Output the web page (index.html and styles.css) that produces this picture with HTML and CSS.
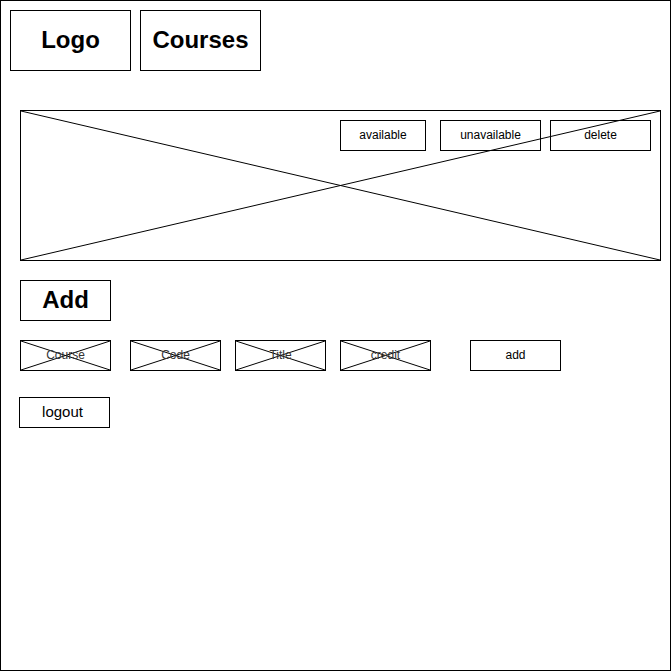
FILE: index.html
```html
<!DOCTYPE html>
<html lang="en">
<head>
  <meta charset="UTF-8" />
  <title>Courses</title>
  <link rel="stylesheet" href="styles.css">
</head>
<body>
  <div class="frame">
    <header class="top">
      <div class="tile">Logo</div>
      <div class="tile">Courses</div>
    </header>

    <section class="banner" aria-label="Course image">
      <div class="banner-actions">
        <button class="btn btn-available">available</button>
        <button class="btn btn-unavailable">unavailable</button>
        <button class="btn btn-delete">delete</button>
      </div>
      <svg class="cross" viewBox="0 0 100 100" preserveAspectRatio="none" aria-hidden="true">
        <line x1="0" y1="0" x2="100" y2="100" />
        <line x1="0" y1="100" x2="100" y2="0" />
      </svg>
    </section>

    <h2 class="add-title">Add</h2>

    <div class="add-row">
      <div class="field field-course">
        <svg class="cross" viewBox="0 0 100 100" preserveAspectRatio="none" aria-hidden="true"><line x1="0" y1="0" x2="100" y2="100" /><line x1="0" y1="100" x2="100" y2="0" /></svg>
        <span>Course</span>
      </div>
      <div class="field field-code">
        <svg class="cross" viewBox="0 0 100 100" preserveAspectRatio="none" aria-hidden="true"><line x1="0" y1="0" x2="100" y2="100" /><line x1="0" y1="100" x2="100" y2="0" /></svg>
        <span>Code</span>
      </div>
      <div class="field field-title">
        <svg class="cross" viewBox="0 0 100 100" preserveAspectRatio="none" aria-hidden="true"><line x1="0" y1="0" x2="100" y2="100" /><line x1="0" y1="100" x2="100" y2="0" /></svg>
        <span>Title</span>
      </div>
      <div class="field field-credit">
        <svg class="cross" viewBox="0 0 100 100" preserveAspectRatio="none" aria-hidden="true"><line x1="0" y1="0" x2="100" y2="100" /><line x1="0" y1="100" x2="100" y2="0" /></svg>
        <span>credit</span>
      </div>
      <button class="btn btn-add">add</button>
    </div>

    <button class="btn logout">logout</button>
  </div>
</body>
</html>
```

FILE: styles.css
```css
/* Reset */
* {
  box-sizing: border-box;
  margin: 0;
  padding: 0;
}
body {
  font-family: 'Liberation Sans', Arial, sans-serif;
  background: #fff;
  color: #000;
}
.frame {
  width: 671px;
  height: 671px;
  border: 1px solid #000;
  padding: 9px 0 0 9px;
  display: flex;
  flex-direction: column;
  align-items: flex-start;
}
/* Header */
.top {
  display: flex;
  gap: 9px;
}
.tile {
  width: 121px;
  height: 61px;
  border: 1px solid #000;
  padding-bottom: 2px;
  display: flex;
  align-items: center;
  justify-content: center;
  font-size: 24px;
  font-weight: 700;
}
/* Banner */
.banner {
  position: relative;
  width: 641px;
  height: 151px;
  margin: 39px 0 0 10px;
  border: 1px solid #000;
}
.cross {
  position: absolute;
  top: 0;
  left: 0;
  width: 100%;
  height: 100%;
}
.cross line {
  stroke: #000;
  stroke-width: 1px;
  vector-effect: non-scaling-stroke;
}
.banner-actions {
  position: absolute;
  top: 9px;
  right: 9px;
  display: flex;
}
.btn {
  height: 31px;
  border: 1px solid #000;
  background: transparent;
  padding-bottom: 1px;
  font-family: inherit;
  font-size: 12px;
  color: #000;
  display: flex;
  align-items: center;
  justify-content: center;
}
.btn-available {
  width: 86px;
  margin-right: 14px;
}
.btn-unavailable {
  width: 101px;
  margin-right: 9px;
}
.btn-delete {
  width: 101px;
}
/* Add section */
.add-title {
  width: 91px;
  height: 41px;
  margin: 19px 0 0 10px;
  border: 1px solid #000;
  padding-bottom: 2px;
  display: flex;
  align-items: center;
  justify-content: center;
  font-size: 24px;
  font-weight: 700;
}
.add-row {
  display: flex;
  margin: 19px 0 0 10px;
}
.field {
  position: relative;
  width: 91px;
  height: 31px;
  border: 1px solid #000;
  padding-bottom: 1px;
  display: flex;
  align-items: center;
  justify-content: center;
  font-size: 12px;
  color: #333;
}
.field span {
  position: relative;
}
.field-course {
  margin-right: 19px;
}
.field-code,
.field-title {
  margin-right: 14px;
}
.field-credit {
  margin-right: 39px;
}
.btn-add {
  width: 91px;
}
.logout {
  width: 91px;
  margin: 26px 0 0 9px;
  padding: 0 4px 2px 0;
  font-size: 15px;
}
```
